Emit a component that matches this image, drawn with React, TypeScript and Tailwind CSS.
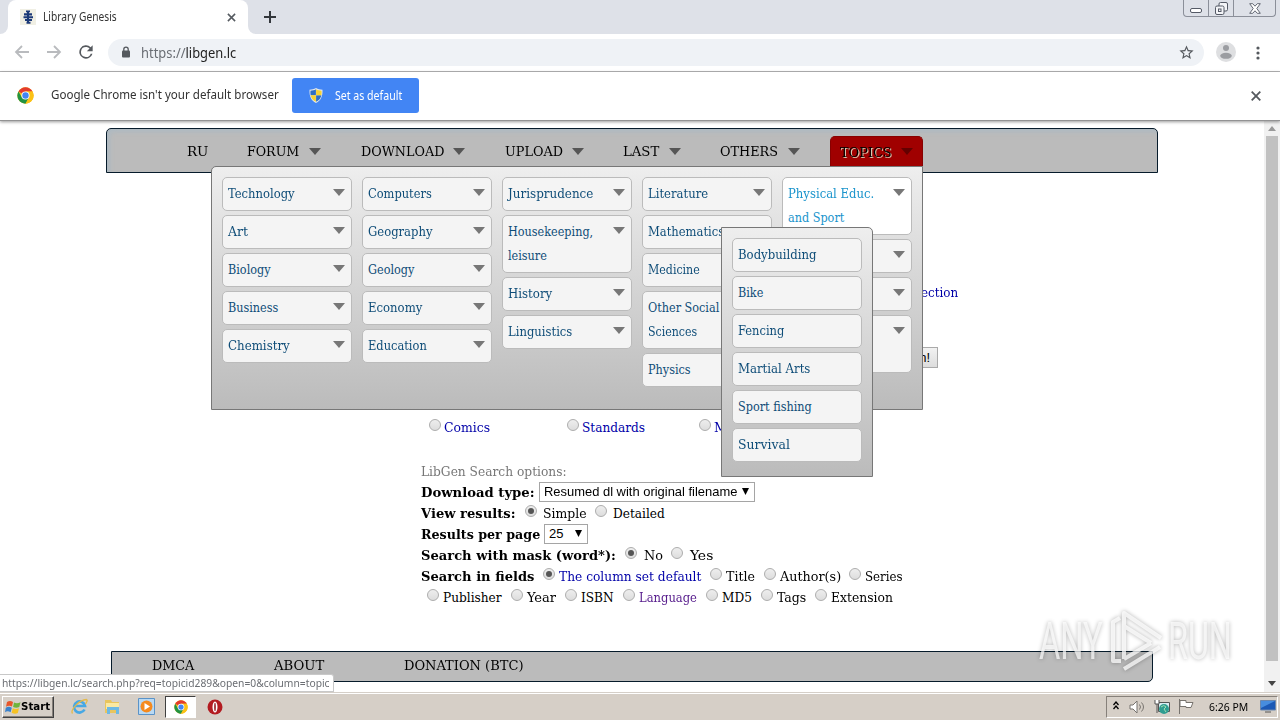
import { useLayoutEffect, useRef, useState } from 'react';
import type { ReactNode } from 'react';

function Fit({ w, children, className = '' }: { w: number; children: ReactNode; className?: string }) {
  const ref = useRef<HTMLSpanElement>(null);
  const [scale, setScale] = useState(1);
  useLayoutEffect(() => {
    if (ref.current) {
      setScale(w / ref.current.offsetWidth);
    }
  }, [w]);
  return (
    <span className={`inline-block shrink-0 whitespace-nowrap ${className}`} style={{ width: w }}>
      <span ref={ref} className="inline-block origin-left" style={{ transform: `scaleX(${scale})` }}>
        {children}
      </span>
    </span>
  );
}

function Arrow({ className = 'fill-[#777]' }: { className?: string }) {
  return (
    <svg viewBox="0 0 12 7" className={`h-[7px] w-3 shrink-0 ${className}`}>
      <path d="M0 0h12L6 7z" />
    </svg>
  );
}

function ChromeLogo({ className }: { className: string }) {
  return (
    <svg viewBox="0 0 48 48" className={className}>
      <circle cx="24" cy="24" r="23" fill="#fbc116" />
      <path d="M24 24 4.1 12.5A23 23 0 0 1 43.9 12.5H24z" fill="#e33b2e" />
      <path d="M4.1 12.5A23 23 0 0 0 24 47l10-17.5L24 24 14 29.5z" fill="#229342" />
      <path d="M24 12.5h19.9A23 23 0 0 1 24 47l10-17.5z" fill="#fbc116" />
      <circle cx="24" cy="24" r="11.5" fill="#fff" />
      <circle cx="24" cy="24" r="9" fill="#4285f4" />
    </svg>
  );
}

function TabStrip() {
  return (
    <div className="flex h-[34px] shrink-0 bg-[#dee1e8]">
      <div className="flex w-2 items-end bg-white">
        <div className="h-full w-2 rounded-br-lg bg-[#dee1e8]" />
      </div>
      <div className="flex bg-[#dee1e8]">
        <div className="flex w-[240px] items-center rounded-t-lg bg-white pl-3">
          <svg viewBox="0 0 16 16" className="h-4 w-4">
            <path d="M0 0h16v16H0z" fill="#f0efe4" />
            <path d="M6 1.500h4v1.800H6zM4 4.200h8v2.200H4zM3.500 7.200h9.500v2H3.500zM5 10h7v2H5zM6.500 12.700h4v2h-4z" fill="#1c3a78" />
            <path d="M7 2h2v12H7z" fill="#1c3a78" />
          </svg>
          <Fit w={74} className="ml-[7px] text-[12px] text-[#333]">Library Genesis</Fit>
          <svg viewBox="0 0 10 10" className="ml-[110px] h-[9px] w-[9px]" stroke="#555a60" strokeWidth="1.7">
            <path d="M1 1l8 8M9 1l-8 8" />
          </svg>
        </div>
      </div>
      <div className="w-2 bg-white">
        <div className="h-full w-2 rounded-bl-lg bg-[#dee1e8]" />
      </div>
      <svg viewBox="0 0 12 12" className="ml-2 mt-[11px] h-3 w-3" stroke="#33373c" strokeWidth="2">
        <path d="M6 0v12M0 6h12" />
      </svg>
      <div className="ml-auto mr-1 flex h-[17px] w-[93px] rounded-b-[4px] border border-t-0 border-[#8b8f99]">
        <div className="flex w-[25px] justify-center border-r border-[#8b8f99]">
          <div className="mt-2 h-[5px] w-3 rounded-[2px] border border-[#555a66] bg-white" />
        </div>
        <div className="flex w-[25px] justify-center border-r border-[#8b8f99]">
          <svg viewBox="0 0 13 13" className="mt-[2px] h-[13px] w-[13px]" fill="#f4f5f8" stroke="#555a66">
            <rect x="4" y=".5" width="8.5" height="8.5" rx="1.5" />
            <rect x=".5" y="4" width="8.5" height="8.5" rx="1.5" />
            <rect x="3.5" y="7" width="2.5" height="2.5" />
          </svg>
        </div>
        <div className="flex flex-1 justify-center">
          <svg viewBox="0 0 12 11" className="mt-[3px] h-[11px] w-3" fill="#fff" stroke="#555a66" strokeWidth=".9">
            <path d="M.7.7h3L6 3.2 8.3.7h3L7.8 5.5l3.5 4.8h-3L6 7.8 3.7 10.3h-3l3.5-4.8z" />
          </svg>
        </div>
      </div>
    </div>
  );
}

function Toolbar() {
  return (
    <div className="flex h-[38px] shrink-0 items-center border-b border-[#b4b4b6] bg-white">
      <svg viewBox="0 0 16 14" className="-mt-px ml-[14px] h-[14px] w-4" fill="none" stroke="#b9bbbe" strokeWidth="1.8">
        <path d="M15 7H2M8 1 2 7l6 6" />
      </svg>
      <svg viewBox="0 0 16 14" className="-mt-px ml-4 h-[14px] w-4" fill="none" stroke="#b9bbbe" strokeWidth="1.8">
        <path d="M1 7h13M8 1l6 6-6 6" />
      </svg>
      <svg viewBox="0 0 24 24" className="-mt-px ml-[14px] h-5 w-5" fill="#55595e">
        <path d="M17.65 6.35A8 8 0 1 0 19.73 14h-2.08A6 6 0 1 1 12 6c1.66 0 3.14.69 4.22 1.78L13 11h7V4z" />
      </svg>
      <div className="-mt-px ml-3 flex h-[27px] w-[1096px] items-center rounded-full bg-[#eff2f6] pl-[13px]">
        <svg viewBox="0 0 10 12" className="h-3 w-[10px]">
          <rect x="1" y="4.5" width="8" height="7" rx="1" fill="#55595e" />
          <path d="M2.8 5V3.3a2.2 2.2 0 0 1 4.4 0V5" fill="none" stroke="#55595e" strokeWidth="1.3" />
        </svg>
        <Fit w={95} className="ml-[10px] text-[14px] text-[#6a6e74]">
          https://<span className="text-[#222]">libgen.lc</span>
        </Fit>
        <svg viewBox="0 0 24 24" className="ml-auto mr-[9px] h-[17px] w-[17px]" fill="#55595e">
          <path d="M22 9.24l-7.19-.62L12 2 9.19 8.63 2 9.24l5.46 4.73L5.82 21 12 17.27 18.18 21l-1.63-7.03zM12 15.4l-3.76 2.27 1-4.28-3.32-2.88 4.38-.38L12 6.1l1.71 4.04 4.38.38-3.32 2.88 1 4.28z" />
        </svg>
      </div>
      <svg viewBox="0 0 20 20" className="-mt-px ml-3 h-5 w-5">
        <circle cx="10" cy="10" r="10" fill="#dedfe1" />
        <circle cx="10" cy="6" r="3" fill="#9b9da1" />
        <ellipse cx="10" cy="13.8" rx="5.8" ry="3" fill="#9b9da1" />
      </svg>
      <svg viewBox="0 0 4 14" className="ml-[20px] h-[14px] w-[4px]" fill="#55595e">
        <circle cx="2" cy="2" r="1.6" />
        <circle cx="2" cy="7" r="1.6" />
        <circle cx="2" cy="12" r="1.6" />
      </svg>
    </div>
  );
}

function InfoBar() {
  return (
    <div className="relative z-40 flex h-[49px] shrink-0 items-center border-b border-[#929293] bg-white pb-px shadow-[0_1px_3px_rgba(0,0,0,0.4)]">
      <ChromeLogo className="ml-[17px] h-[17px] w-[17px]" />
      <Fit w={228} className="ml-[17px] text-[12.5px] text-[#333]">Google Chrome isn't your default browser</Fit>
      <button className="ml-[13px] flex h-[35px] w-[127px] items-center rounded-[3px] bg-[#4285f4] pl-[17px] text-white">
        <svg viewBox="0 0 14 15" className="h-[15px] w-[14px]">
          <path d="M7 0c2 1.300 4.500 1.700 6.500 1.700C13.800 8 12 12.500 7 15 2 12.500.2 8 .5 1.700 2.500 1.700 5 1.300 7 0z" fill="#dfe6ee" />
          <path d="M6.900 1.300v6H1.600C1.300 5.500 1.400 4 1.500 2.700c2 0 4-.4 5.400-1.400zM7.100 7.300h5.300c-.7 3-2.300 5.200-5.300 6.500z" fill="#2f6ec4" />
          <path d="M7.100 1.300v6h5.300c.3-1.800.2-3.300.1-4.600-2 0-4-.4-5.400-1.400zM6.900 7.300H1.600c.7 3 2.300 5.200 5.300 6.500z" fill="#f7d232" />
        </svg>
        <Fit w={67} className="ml-3 text-left text-[12px]">Set as default</Fit>
      </button>
      <svg viewBox="0 0 10 10" className="ml-auto mr-[19px] h-[10px] w-[10px]" stroke="#55595e" strokeWidth="1.8">
        <path d="M.7.7l8.600 8.600M9.300.7.7 9.300" />
      </svg>
    </div>
  );
}

type Entry = { lines: [string, number][]; active?: boolean };

const columns: Entry[][] = [
  [
    { lines: [['Technology', 67]] },
    { lines: [['Art', 20]] },
    { lines: [['Biology', 43]] },
    { lines: [['Business', 50]] },
    { lines: [['Chemistry', 62]] },
  ],
  [
    { lines: [['Computers', 64]] },
    { lines: [['Geography', 64]] },
    { lines: [['Geology', 46]] },
    { lines: [['Economy', 54]] },
    { lines: [['Education', 59]] },
  ],
  [
    { lines: [['Jurisprudence', 85]] },
    { lines: [['Housekeeping,', 85], ['leisure', 39]] },
    { lines: [['History', 44]] },
    { lines: [['Linguistics', 64]] },
  ],
  [
    { lines: [['Literature', 60]] },
    { lines: [['Mathematics', 76]] },
    { lines: [['Medicine', 52]] },
    { lines: [['Other Social', 71], ['Sciences', 49]] },
    { lines: [['Physics', 43]] },
  ],
  [
    { lines: [['Physical Educ.', 86], ['and Sport', 56]], active: true },
    { lines: [['', 0]] },
    { lines: [['', 0]] },
    { lines: [['', 0], ['', 0]] },
  ],
];

const sports: Entry[] = [
  { lines: [['Bodybuilding', 78]] },
  { lines: [['Bike', 25]] },
  { lines: [['Fencing', 46]] },
  { lines: [['Martial Arts', 72]] },
  { lines: [['Sport fishing', 74]] },
  { lines: [['Survival', 52]] },
];

function MenuItem({ entry, arrow = true }: { entry: Entry; arrow?: boolean }) {
  return (
    <div
      className={`flex w-[130px] justify-between rounded-[5px] border border-[#bbb] py-1 pl-[5px] pr-[6px] text-[12.5px] leading-6 ${
        entry.active ? 'bg-white text-[#1a94cc]' : 'bg-[#f4f4f4] text-[#0f4d78]'
      }`}
    >
      <div className="flex flex-col">
        {entry.lines.map(([text, w], i) =>
          text ? <Fit key={i} w={w} className="h-6">{text}</Fit> : <span key={i} className="h-6" />,
        )}
      </div>
      {arrow && <div className="-ml-6 pt-[7px]"><Arrow className="block fill-[#777]" /></div>}
    </div>
  );
}

function TopicsMenu() {
  return (
    <div className="absolute left-[104px] top-[37px] z-10 h-[244px] w-[712px] rounded-tl-[5px] border border-[#777] bg-linear-to-b from-[#eee] to-[#bbb]">
      <div className="flex items-start gap-[10px] px-[10px] pt-[10px]">
        {columns.map((col, i) => (
          <div key={i} className="flex flex-col gap-1">
            {col.map((e, j) => (
              <MenuItem key={j} entry={e} />
            ))}
          </div>
        ))}
      </div>
      <div className="absolute left-[509px] top-[60px] flex h-[250px] w-[152px] flex-col items-center gap-1 rounded-tr-[5px] border border-[#777] bg-linear-to-b from-[#eee] to-[#bbb] pt-[10px]">
        {sports.map((e, j) => (
          <MenuItem key={j} entry={e} arrow={false} />
        ))}
      </div>
    </div>
  );
}

function NavItem({ label, w, gap = 10, className }: { label: string; w: number; gap?: number; className: string }) {
  return (
    <div className={`flex items-center ${className}`}>
      <Fit w={w}>{label}</Fit>
      <span style={{ marginLeft: gap }}><Arrow className="fill-[#555]" /></span>
    </div>
  );
}

function NavBar() {
  return (
    <nav className="relative ml-[106px] mt-[7px] h-[45px] w-[1052px] rounded-t-[5px] border border-[#061b2b] bg-[#bbb] shadow-[inset_3px_3px_4px_rgba(165,185,198,0.6)]">
      <div className="flex h-full text-[13.5px] leading-5 text-black">
        <Fit w={21} className="ml-[80px] mt-[12px]">RU</Fit>
        <NavItem label="FORUM" w={52} className="ml-[39px] mt-[12px] h-5" />
        <NavItem label="DOWNLOAD" w={83} gap={9} className="ml-[40px] mt-[12px] h-5" />
        <NavItem label="UPLOAD" w={58} gap={9} className="ml-[40px] mt-[12px] h-5" />
        <NavItem label="LAST" w={36} className="ml-[39px] mt-[12px] h-5" />
        <NavItem label="OTHERS" w={58} className="ml-[39px] mt-[12px] h-5" />
        <div className="ml-[30px] mt-[7px] flex h-[30px] w-[93px] items-center rounded-t-[5px] border border-b-0 border-[#800] bg-[#a00000] pl-[9px]">
          <Fit w={52} className="text-black [text-shadow:1px_1px_0_#d8c8b0]">TOPICS</Fit>
          <Arrow className="ml-[9px] fill-[#640000]" />
        </div>
      </div>
      <TopicsMenu />
    </nav>
  );
}

function Opt({ children, w, checked = false, gap = 'gap-1', className = '', text = '' }: {
  children: ReactNode; w: number; checked?: boolean; gap?: string; className?: string; text?: string;
}) {
  return (
    <label className={`flex shrink-0 items-center ${gap} ${className}`}>
      <span className="-mt-[3px] flex h-3 w-3 shrink-0 items-center justify-center rounded-full border border-[#adadad] bg-linear-to-b from-[#eee] to-[#ddd]">
        {checked && <span className="h-[6px] w-[6px] rounded-full bg-[#555]" />}
      </span>
      <Fit w={w} className={text}>{children}</Fit>
    </label>
  );
}

function Select({ children, w, className }: { children: string; w: number; className: string }) {
  return (
    <div className={`flex h-5 items-center justify-between border border-[#a5a5a5] bg-white pl-1 pr-[5px] font-['Liberation_Sans',sans-serif] text-[13px] ${className}`}>
      <Fit w={w}>{children}</Fit>
      <svg viewBox="0 0 7 7" className="h-[7px] w-[7px]"><path d="M0 0h7L3.500 7z" /></svg>
    </div>
  );
}

function SearchForm() {
  const row = 'flex h-[21px] items-center';
  return (
    <div className="ml-[421px] flex w-[540px] flex-col text-[13.5px] leading-5">
      <div className="mt-[108px] flex h-[22px] items-center justify-end pr-[3px]">
        <Fit w={61} className="text-[#0000a8]">Collection</Fit>
      </div>
      <div className="mt-[43px] flex h-[23px] items-center justify-end pr-[23px]">
        <button className="h-[21px] w-[58px] border border-[#aaa] bg-linear-to-b from-[#f2f2f2] to-[#ddd] pr-[7px] text-right font-['Liberation_Sans',sans-serif] text-[13px] leading-4">
          Search!
        </button>
      </div>
      <div className="mt-[47px] flex h-[21px] items-center pl-2 text-[#0000a8]">
        <Opt w={46} gap="gap-[3px]">Comics</Opt>
        <Opt w={63} gap="gap-[3px]" className="ml-[77px]">Standards</Opt>
        <Opt w={70} gap="gap-[3px]" className="ml-[54px]">Magazines</Opt>
      </div>
      <div className={`mt-[23px] text-[#777] ${row}`}><Fit w={146}>LibGen Search options:</Fit></div>
      <div className={row}>
        <Fit w={114} className="font-bold">Download type:</Fit>
        <Select w={193} className="ml-1 w-[216px]">Resumed dl with original filename</Select>
      </div>
      <div className={row}>
        <Fit w={95} className="font-bold">View results:</Fit>
        <Opt w={44} checked gap="gap-[6px]" className="ml-[9px]">Simple</Opt>
        <Opt w={52} gap="gap-[6px]" className="ml-2">Detailed</Opt>
      </div>
      <div className={row}>
        <Fit w={119} className="font-bold">Results per page</Fit>
        <Select w={14} className="ml-1 w-11">25</Select>
      </div>
      <div className={row}>
        <Fit w={195} className="font-bold">Search with mask (word*):</Fit>
        <Opt w={19} checked gap="gap-[7px]" className="ml-[9px]">No</Opt>
        <Opt w={23} gap="gap-[7px]" className="ml-2">Yes</Opt>
      </div>
      <div className={row}>
        <Fit w={113} className="font-bold">Search in fields</Fit>
        <Opt w={142} checked className="ml-[9px]" text="text-[#0000a8]">The column set default</Opt>
        <Opt w={29} className="ml-[9px]">Title</Opt>
        <Opt w={61} className="ml-[9px]">Author(s)</Opt>
        <Opt w={38} className="ml-2">Series</Opt>
      </div>
      <div className={`pl-[6px] ${row}`}>
        <Opt w={59}>Publisher</Opt>
        <Opt w={29} className="ml-[9px]">Year</Opt>
        <Opt w={33} className="ml-[9px]">ISBN</Opt>
        <Opt w={58} className="ml-[9px]" text="text-[#551a8b]">Language</Opt>
        <Opt w={30} className="ml-[9px]">MD5</Opt>
        <Opt w={29} className="ml-[9px]">Tags</Opt>
        <Opt w={62} className="ml-[9px]">Extension</Opt>
      </div>
    </div>
  );
}

function Watermark() {
  return (
    <div className="absolute left-[1039px] top-[488px] z-20 flex h-[64px] items-center font-[Roboto,sans-serif] text-[52px] leading-[64px] text-white/70 drop-shadow-[0_0_2px_rgba(0,0,0,0.4)]">
      <Fit w={64} className="mt-[2px]">ANY</Fit>
      <svg viewBox="0 0 56 64" className="ml-[6px] h-[64px] w-[56px]" fill="none" stroke="#fff" strokeOpacity=".75" strokeWidth="4" strokeLinejoin="round">
        <path d="M12 52H4V13l7-4M15 50V4l37 25M15 17l27 17M15 50 42 34M15 60l36-22" />
      </svg>
      <Fit w={64} className="ml-[3px] mt-[2px]">RUN</Fit>
    </div>
  );
}

function ScrollBar() {
  return (
    <div className="flex w-4 shrink-0 flex-col items-center bg-[#f1f1f1]">
      <svg viewBox="0 0 8 5" className="mt-[5px] h-[5px] w-2 shrink-0 fill-[#999]"><path d="M0 5 4 0l4 5z" /></svg>
      <div className="mt-[5px] h-[525px] w-3 shrink-0 bg-[#c1c1c1]" />
      <svg viewBox="0 0 8 5" className="mt-[20px] h-[5px] w-2 shrink-0 fill-[#444]"><path d="M0 0l4 5 4-5z" /></svg>
    </div>
  );
}

function Page() {
  return (
    <div className="relative flex h-[571px] shrink-0 overflow-hidden bg-white font-['DejaVu_Serif_Condensed','DejaVu_Serif',serif]">
      <div className="flex-1">
        <NavBar />
        <SearchForm />
        <footer className="ml-[111px] mt-[44px] flex h-[31px] w-[1042px] rounded-b-[5px] border border-[#061b2b] bg-[#bbb] pl-10 text-[13.500px] leading-[27px]">
          <Fit w={42}>DMCA</Fit>
          <Fit w={50} className="ml-20">ABOUT</Fit>
          <Fit w={120} className="ml-20">DONATION (BTC)</Fit>
        </footer>
      </div>
      <ScrollBar />
      <Watermark />
      <div className="absolute bottom-0 left-0 h-[18px] w-[334px] rounded-tr-[3px] border border-l-0 border-[#c8c8c8] bg-white pl-[2px] font-['Noto_Sans',sans-serif] text-[11px] leading-4 text-[#6b6e73]">
        <Fit w={328}>https://libgen.lc/search.php?req=topicid289&amp;open=0&amp;column=topic</Fit>
      </div>
    </div>
  );
}

function TaskBar() {
  return (
    <div className="flex h-[28px] shrink-0 items-center border-t border-[#d5cfc8] bg-[#d6cfc7] shadow-[inset_0_1px_0_#fff]">
      <button className="ml-[2px] flex h-[22px] w-[52px] items-center border border-b-[#404040] border-l-white border-r-[#404040] border-t-white pl-[2px] shadow-[inset_-1px_-1px_0_#86807a]">
        <svg viewBox="0 0 16 14" className="h-[14px] w-4">
          <path d="M2 2c2-1.500 4-1.500 6 0L7 6.500c-2-1.200-4-1-6 .2z" fill="#e8562a" />
          <path d="M9 2.500c2 1 4 1 6.500-.3L14.300 7c-2 1-4 1-6.200 0z" fill="#6fb43a" />
          <path d="M.8 7.700c2-1.200 4-1.200 6 0l-1.200 4.600c-2-1.300-4-1.200-5.600 0z" fill="#3a82cc" />
          <path d="M7.800 8.200c2 1 4 1 6.200 0L12.800 13c-2 1-4 .8-6.200-.3z" fill="#f6c224" />
        </svg>
        <Fit w={29} className="mt-px font-['DejaVu_Sans_Condensed',sans-serif] text-[11px] font-bold leading-4">Start</Fit>
      </button>
      <svg viewBox="0 0 17 17" className="ml-[17px] h-[17px] w-[17px]" fill="none">
        <path d="M13.500 11.500A5.500 5.500 0 1 1 14 8H4" stroke="#47a8e4" strokeWidth="2.700" />
        <path d="M1.500 15.500C-1 12 8 2 15.500 1.500c1.500.5 0 3-1 4.500" stroke="#e5b947" strokeWidth="1.300" />
      </svg>
      <svg viewBox="0 0 17 17" className="ml-4 h-[17px] w-[17px]">
        <path d="M1 2h6l1 2h7v11H1z" fill="#e9c55d" />
        <path d="M2 5h13v6H2z" fill="#fbe9a1" />
        <path d="M3 16V9h12v7h-3v-4H6v4z" fill="#6db9e4" />
      </svg>
      <svg viewBox="0 0 17 17" className="ml-[17px] h-[17px] w-[17px]">
        <path d="M.5.5h16v16H.5z" fill="#b9d9f3" stroke="#5a93c8" />
        <circle cx="8.500" cy="8.500" r="6" fill="#f58a1e" />
        <path d="M6.500 5v7l5.500-3.500z" fill="#fff" />
      </svg>
      <div className="ml-[10px] flex h-[22px] w-[31px] items-center justify-center border border-b-white border-l-[#404040] border-r-white border-t-[#404040] bg-white">
        <ChromeLogo className="h-[14px] w-[14px]" />
      </div>
      <svg viewBox="0 0 16 16" className="ml-[11px] h-4 w-4">
        <circle cx="8" cy="8" r="7.500" fill="#b31b20" />
        <ellipse cx="8" cy="8" rx="2.500" ry="5.500" fill="#fff" />
        <ellipse cx="8" cy="8" rx=".8" ry="4.300" fill="#8f1218" />
      </svg>
      <div className="ml-auto mr-[2px] flex h-[22px] w-[172px] items-center border border-b-white border-l-[#86807a] border-r-white border-t-[#86807a] pl-[6px]">
        <svg viewBox="0 0 6 9" className="mb-[2px] h-[9px] w-[6px]" fill="none" stroke="#000" strokeWidth="1.300">
          <path d="M.5 4 3 1l2.500 3M.5 8 3 5l2.500 3" />
        </svg>
        <svg viewBox="0 0 17 14" className="ml-[10px] h-[14px] w-[17px]" fill="#fff" stroke="#77736e">
          <path d="M1 5h3l4-4v12L4 9H1z" />
          <path d="M10.500 4.500q2 2.500 0 5M12.500 2.500q4 4.500 0 9" fill="none" />
        </svg>
        <svg viewBox="0 0 16 16" className="ml-[8px] h-4 w-4">
          <path d="M4.500 3.500h11v9h-11z" fill="#d9edf1" stroke="#555" />
          <path d="M1 1v4h4V1M3 5v9" stroke="#555" fill="#fff" />
          <circle cx="10" cy="10" r="5" fill="#2f9d91" />
          <path d="M7 8q3-3 5 0l-2 2 2 3" stroke="#a3deb1" fill="none" />
        </svg>
        <svg viewBox="0 0 16 15" className="ml-[8px] h-[15px] w-4" fill="#fff" stroke="#77736e">
          <path d="M1.500 0v15M2 1.500h6v2h7l-2 5H8v-1H2z" />
        </svg>
        <Fit w={39} className="ml-[15px] font-['Noto_Sans',sans-serif] text-[11.500px] text-black">6:26 PM</Fit>
        <svg viewBox="0 0 16 13" className="ml-[12px] h-[13px] w-4">
          <path d="M.5.5h15v9.500H.5z" fill="#1c59b5" stroke="#6b87ac" />
          <path d="M1 1h14L1 8z" fill="#478dde" />
          <path d="M5 12h6" stroke="#555" />
        </svg>
      </div>
    </div>
  );
}

export default function App() {
  return (
    <div className="flex h-[720px] w-[1280px] flex-col overflow-hidden bg-white font-['Noto_Sans',sans-serif]">
      <TabStrip />
      <Toolbar />
      <InfoBar />
      <Page />
      <TaskBar />
    </div>
  );
}
